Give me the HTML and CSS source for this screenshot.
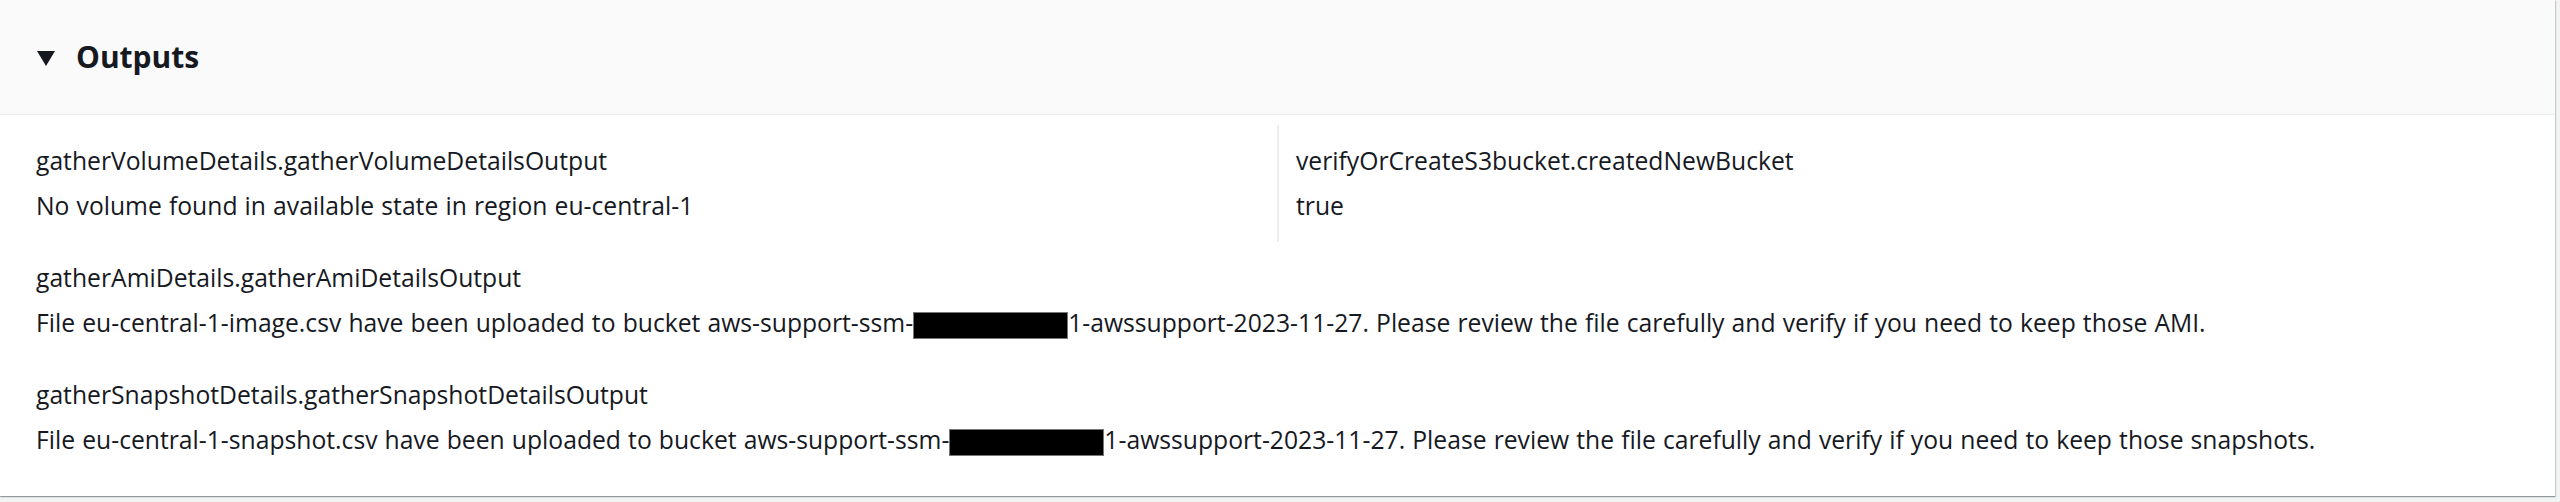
FILE: index.html
```html
<!DOCTYPE html>
<html lang="en">
<head>
    <meta charset="UTF-8">
    <meta name="viewport" content="width=device-width, initial-scale=1.0">
    <title>Outputs</title>
    <link rel="stylesheet" href="styles.css">
</head>
<body>

    <div class="container">
        <div class="container-header">
            <span class="caret"></span>
            <h2>Outputs</h2>
        </div>

        <div class="container-body">
            <div class="columns">
                <div class="column">
                    <div class="pair">
                        <div class="key">gatherVolumeDetails.gatherVolumeDetailsOutput</div>
                        <div class="value">No volume found in available state in region eu-central-1</div>
                    </div>
                </div>
                <div class="column divided">
                    <div class="pair">
                        <div class="key">verifyOrCreateS3bucket.createdNewBucket</div>
                        <div class="value">true</div>
                    </div>
                </div>
            </div>

            <div class="pair">
                <div class="key">gatherAmiDetails.gatherAmiDetailsOutput</div>
                <div class="value">File eu-central-1-image.csv have been uploaded to bucket aws-support-ssm-<span class="redacted"></span>1-awssupport-2023-11-27. Please review the file carefully and verify if you need to keep those AMI.</div>
            </div>

            <div class="pair">
                <div class="key">gatherSnapshotDetails.gatherSnapshotDetailsOutput</div>
                <div class="value">File eu-central-1-snapshot.csv have been uploaded to bucket aws-support-ssm-<span class="redacted"></span>1-awssupport-2023-11-27. Please review the file carefully and verify if you need to keep those snapshots.</div>
            </div>
        </div>
    </div>

</body>
</html>
```

FILE: styles.css
```css
body {
    margin: 0;
    background-color: #f2f3f3;
    font-family: 'Open Sans', 'Liberation Sans', sans-serif;
    color: #16191f;
    min-height: 502px;
}
.container {
    width: 2555px;
    background-color: #fff;
    box-shadow: 0 1px 1px 0 rgba(0, 28, 36, 0.3), 1px 1px 1px 0 rgba(0, 28, 36, 0.15);
}
.container-header {
    display: flex;
    align-items: center;
    height: 114px;
    padding-left: 37px;
    background-color: #fafafa;
    border-bottom: 1px solid #eaeded;
}
.caret {
    width: 0;
    height: 0;
    border-left: 9px solid transparent;
    border-right: 9px solid transparent;
    border-top: 15px solid #16191f;
    margin-right: 21px;
    margin-top: 2px;
}
.container-header h2 {
    margin: 0;
    font-size: 30px;
    font-weight: 700;
    line-height: 40px;
}
.container-body {
    padding: 10px 36px 20px;
}
.columns {
    display: grid;
    grid-template-columns: 1241px 1fr;
}
.column.divided {
    border-left: 2px solid #eaeded;
    padding-left: 17px;
}
.pair {
    padding: 16px 0;
}
.key, .value {
    font-size: 24.7px;
    line-height: 40px;
    white-space: nowrap;
}
.value {
    margin-top: 5px;
    word-spacing: 0.7px;
}
.redacted {
    display: inline-block;
    width: 155px;
    height: 27px;
    background-color: #000;
    border: 1px solid #777;
    box-sizing: border-box;
    vertical-align: middle;
}
```
